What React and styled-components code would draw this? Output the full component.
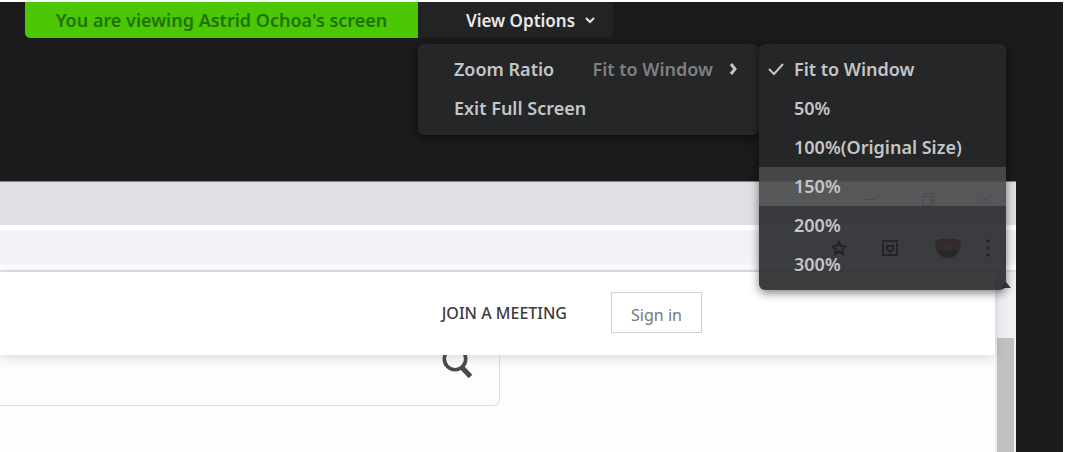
import React from 'react';
import styled, { createGlobalStyle } from 'styled-components';

const GlobalStyle = createGlobalStyle`
  *, *::before, *::after {
    box-sizing: border-box;
  }
  body {
    margin: 0;
    background-color: #fff;
    font-family: 'Noto Sans', 'Open Sans', sans-serif;
  }
  button, input {
    font-family: inherit;
    margin: 0;
    padding: 0;
    border: 0;
    background: none;
  }
  ul {
    list-style: none;
    margin: 0;
    padding: 0;
  }
`;

const Screen = styled.div`
  position: relative;
  display: flex;
  flex-direction: column;
  height: 100vh;
  padding-top: 2px;
  overflow: hidden;
`;

const Stage = styled.div`
  flex: 1;
  display: flex;
  flex-direction: column;
  margin-right: 2px;
  padding-right: 47px;
  background-color: #1b1b1b;
  min-height: 0;
`;

const ShareBar = styled.header`
  display: flex;
  height: 36px;
  margin: 0 0 143px 25px;
  flex-shrink: 0;
`;

const Banner = styled.div`
  width: 393px;
  line-height: 36px;
  text-align: center;
  font-size: 18px;
  font-weight: 600;
  color: #1f7204;
  background-color: #4cc704;
  border-bottom-left-radius: 5px;
`;

const OptionsButton = styled.button`
  display: flex;
  align-items: center;
  justify-content: center;
  gap: 10px;
  width: 195px;
  padding-left: 30px;
  font-size: 17px;
  font-weight: 600;
  color: #e8e8e8;
  background-color: #212325;
  border-bottom-right-radius: 5px;
`;

const Panel = styled.div`
  background-color: rgba(38, 40, 42, 0.9);
  border-radius: 6px;
  box-shadow: 0 3px 10px rgba(0, 0, 0, 0.5);
`;

const OptionsMenu = styled(Panel)`
  position: absolute;
  top: 44px;
  left: 418px;
  width: 341px;
  height: 91px;
  padding: 6px 0;
`;

const ZoomMenu = styled(Panel)`
  position: absolute;
  top: 44px;
  left: 759px;
  width: 247px;
  height: 246px;
  padding: 6px 0;
`;

const MenuButton = styled.button`
  display: flex;
  align-items: center;
  width: 100%;
  height: 39px;
  padding: 0 ${props => (props.$check ? 9 : 22)}px 2px ${props => (props.$check ? 9 : 36)}px;
  gap: ${props => (props.$check ? 10 : 0)}px;
  font-size: 18px;
  font-weight: 600;
  text-align: left;
  white-space: nowrap;
  color: #c4c5c6;
  background-color: ${props => (props.$active ? 'rgba(255, 255, 255, 0.15)' : 'transparent')};
`;

const Current = styled.span`
  margin: 0 16px 0 auto;
  color: #7f8081;
`;

const CheckSlot = styled.span`
  display: flex;
  width: 16px;
`;

const Browser = styled.main`
  flex: 1;
  display: flex;
  flex-direction: column;
  background-color: #fdfdfd;
  border-top: 1px solid #808083;
  min-height: 0;
`;

const TitleBar = styled.div`
  display: flex;
  align-items: center;
  justify-content: flex-end;
  gap: 44px;
  height: 43px;
  padding: 0 23px 10px 0;
  background-color: #e1e0e5;
  color: #55555a;
  flex-shrink: 0;
`;

const Toolbar = styled.div`
  display: flex;
  align-items: center;
  justify-content: flex-end;
  height: 47px;
  padding: 0 26px 4px 0;
  border-top: 5px solid #fff;
  border-bottom: 2px solid #e3e3e5;
  background: linear-gradient(#f3f2f7 32px, #fff 36px);
  flex-shrink: 0;
`;

const IconButton = styled.button`
  display: flex;
  margin-left: ${props => props.$gap || 0}px;
  color: inherit;
`;

const Page = styled.div`
  flex: 1;
  display: flex;
  min-height: 0;
`;

const Content = styled.div`
  flex: 1;
`;

const SiteHeader = styled.nav`
  position: relative;
  display: flex;
  align-items: center;
  justify-content: flex-end;
  gap: 44px;
  height: 83px;
  padding: 0 293px 2px 0;
  background-color: #fff;
  box-shadow: 0 2px 12px rgba(70, 50, 70, 0.2);
`;

const JoinLink = styled.a`
  font-size: 16px;
  font-weight: 500;
  color: #3c3c40;
  text-decoration: none;
`;

const SignIn = styled.button`
  width: 91px;
  height: 41px;
  padding-top: 4px;
  border: 1px solid #d0d0d3;
  font-size: 16px;
  color: #77777b;
`;

const SearchBox = styled.form`
  display: flex;
  align-items: flex-start;
  width: 500px;
  height: 51px;
  padding: 0 26px 0 0;
  border: 1px solid #dedee0;
  border-top: 0;
  border-left: 0;
  border-bottom-right-radius: 6px;
`;

const SearchInput = styled.input`
  flex: 1;
  height: 50px;
  outline: none;
`;

const ScrollBar = styled.div`
  display: flex;
  flex-direction: column;
  align-items: center;
  width: 21px;
  background-color: #f2eff4;
`;

const ScrollArrow = styled.svg`
  display: block;
  margin: 10px 0 50px;
`;

const Thumb = styled.div`
  flex: 1;
  width: 17px;
  background-color: #c1c1c1;
`;

const zoomLevels = ['Fit to Window', '50%', '100%(Original Size)', '150%', '200%', '300%'];

function Stroke({ d, width, height, weight = 2 }) {
  return (
    <svg width={width} height={height} viewBox={`0 0 ${width} ${height}`} fill="none" stroke="currentColor" strokeWidth={weight} aria-hidden="true">
      <path d={d} />
    </svg>
  );
}

function BrowserWindow() {
  return (
    <Browser>
      <TitleBar>
        <IconButton aria-label="Minimize"><Stroke d="M0 7.5h13" width={14} height={14} weight={1} /></IconButton>
        <IconButton aria-label="Restore"><Stroke d="M1.5 4.5h9v9h-9zM4 4V1.5h9v9h-2" width={14} height={14} weight={1} /></IconButton>
        <IconButton aria-label="Close"><Stroke d="M2 2l10 10M12 2L2 12" width={14} height={14} weight={1} /></IconButton>
      </TitleBar>
      <Toolbar>
        <IconButton aria-label="Bookmark"><Stroke d="M8 2l2 4 4.5.5-3.500 3 1 4.500-4-2.500-4 2.500 1-4.500-3.500-3L6 6z" width={16} height={16} /></IconButton>
        <IconButton aria-label="Extension" $gap={34}>
          <Stroke d="M1 2h16M2 4v12h14V4M6 7h6v3l-3 3-3-3z" width={18} height={18} />
        </IconButton>
        <IconButton aria-label="Profile" $gap={35}>
          <svg width="28" height="22" viewBox="0 0 28 22" aria-hidden="true">
            <path d="M1 5c3-4 8-3 13-3s10-1 13 3c0 9-5 16-13 16S1 14 1 5z" fill="#a33c28" />
            <path d="M4 14h20c-2 5-5 7-10 7s-8-2-10-7z" fill="#202020" />
            <circle cx="14" cy="9" r="4" fill="#d9703b" />
          </svg>
        </IconButton>
        <IconButton aria-label="More" $gap={24}>
          <svg width="4" height="20" viewBox="0 0 4 20" fill="currentColor" aria-hidden="true">
            <circle cx="2" cy="3" r="1.8" />
            <circle cx="2" cy="10" r="1.8" />
            <circle cx="2" cy="17" r="1.8" />
          </svg>
        </IconButton>
      </Toolbar>
      <Page>
        <Content>
          <SiteHeader>
            <JoinLink href="#join">JOIN A MEETING</JoinLink>
            <SignIn>Sign in</SignIn>
          </SiteHeader>
          <SearchBox>
            <SearchInput aria-label="Search" />
            <IconButton aria-label="Submit search" type="button">
              <svg width="31" height="25" viewBox="0 0 31 25" fill="none" stroke="#4a4a4c" aria-hidden="true">
                <circle cx="13" cy="4" r="10.7" strokeWidth="3.6" />
                <path d="M19.500 12l9 9.500" strokeWidth="5" />
              </svg>
            </IconButton>
          </SearchBox>
        </Content>
        <ScrollBar>
          <ScrollArrow width="10" height="6" viewBox="0 0 10 6" aria-hidden="true">
            <path d="M5 0l5 6H0z" fill="#444" />
          </ScrollArrow>
          <Thumb />
        </ScrollBar>
      </Page>
    </Browser>
  );
}

function App() {
  return (
    <>
      <GlobalStyle />
      <Screen>
        <Stage>
          <ShareBar>
            <Banner>You are viewing Astrid Ochoa&apos;s screen</Banner>
            <OptionsButton>
              View Options
              <Stroke d="M1 2l4 4 4-4" width={10} height={8} />
            </OptionsButton>
          </ShareBar>
          <BrowserWindow />
        </Stage>
        <OptionsMenu>
          <MenuButton>
            Zoom Ratio
            <Current>Fit to Window</Current>
            <Stroke d="M2 1l4 5-4 5" width={8} height={12} weight={3} />
          </MenuButton>
          <MenuButton>Exit Full Screen</MenuButton>
        </OptionsMenu>
        <ZoomMenu as="ul">
          {zoomLevels.map((level, i) => (
            <li key={level}>
              <MenuButton $check $active={level === '150%'}>
                <CheckSlot>
                  {i === 0 ? <Stroke d="M1 7l5 5 9-10" width={16} height={14} /> : null}
                </CheckSlot>
                {level}
              </MenuButton>
            </li>
          ))}
        </ZoomMenu>
      </Screen>
    </>
  );
}

export default App;
